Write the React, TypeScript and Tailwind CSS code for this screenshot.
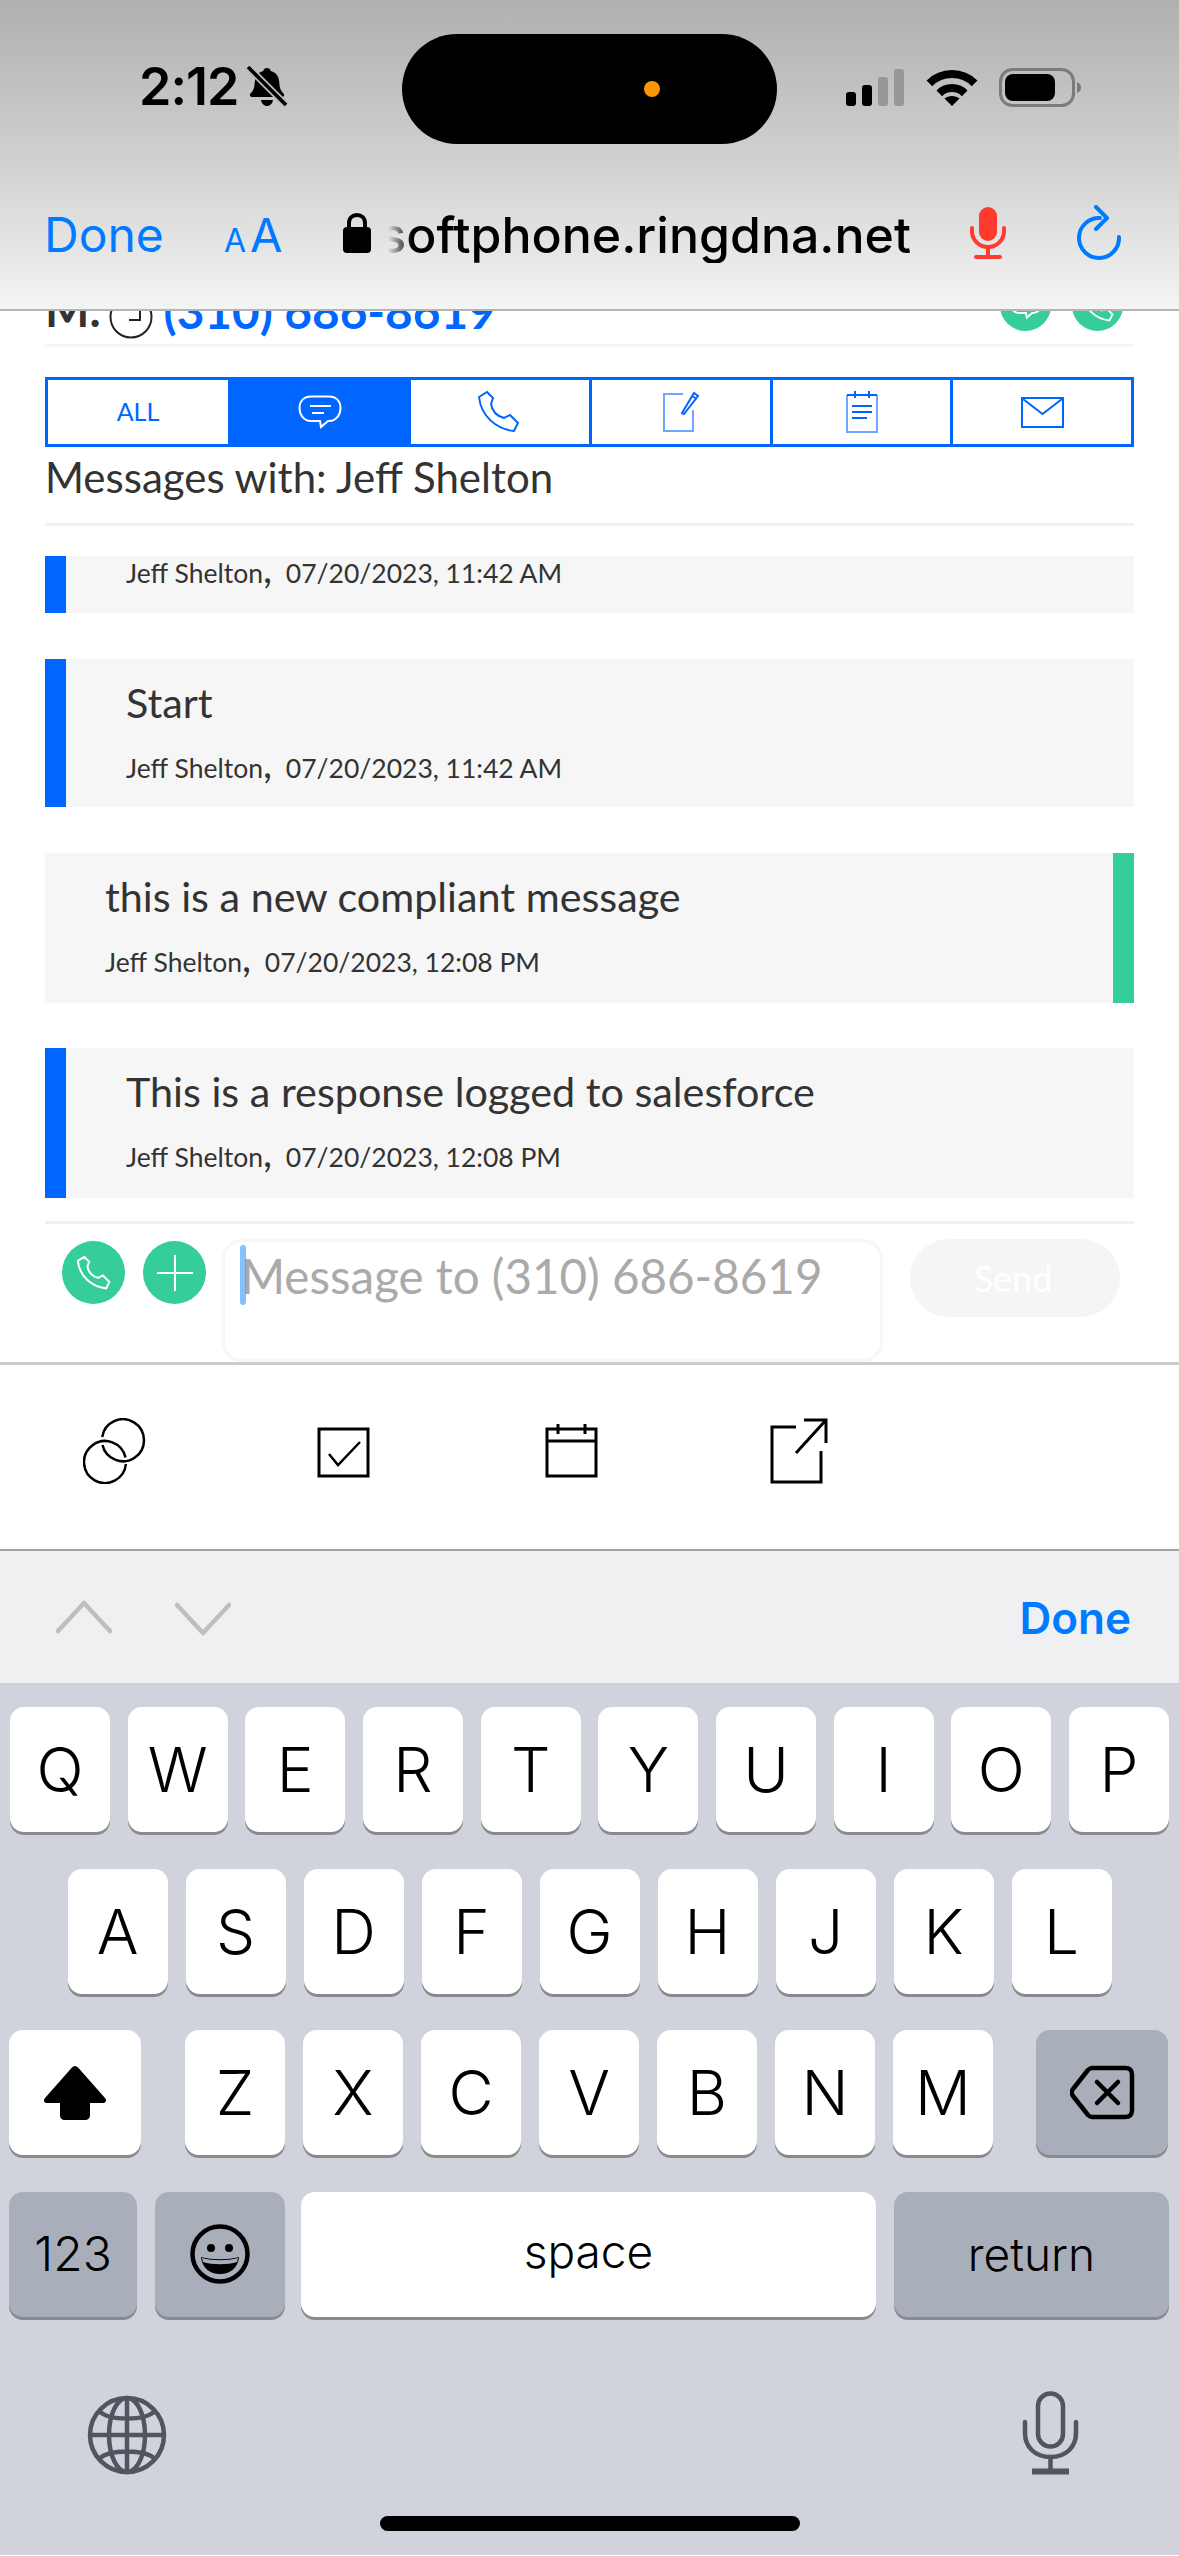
const row1 = ["Q", "W", "E", "R", "T", "Y", "U", "I", "O", "P"]
const row2 = ["A", "S", "D", "F", "G", "H", "J", "K", "L"]
const row3 = ["Z", "X", "C", "V", "B", "N", "M"]

const phonePath = "M1 6 L9 1 L15 7 L13 13 C14 20 19 25 26 27 L32 24 L40 32 L36 40 C18 38 3 25 1 6Z"

const messages = [
  { text: "Start", stamp: "07/20/2023, 11:42 AM", side: "left", box: "h-[148px] mt-[46px]" },
  { text: "this is a new compliant message", stamp: "07/20/2023, 12:08 PM", side: "right", box: "h-[150px] mt-[46px]" },
  { text: "This is a response logged to salesforce", stamp: "07/20/2023, 12:08 PM", side: "left", box: "h-[150px] mt-[45px]" },
]

const Stamp = ({ stamp }: { stamp: string }) => (
  <p className="text-[26.500px] leading-[34px] text-[#333] whitespace-nowrap">
    Jeff Shelton<span className="text-[40px] leading-[20px] mr-[7px]">,</span> {stamp}
  </p>
)

const Key = ({ label, w = "w-[100px]", dark, size = "text-[62px]", children }: { label?: string; w?: string; dark?: boolean; size?: string; children?: React.ReactNode }) => (
  <div className={`${w} h-[125px] shrink-0 rounded-[14px] flex items-center justify-center shadow-[0_3px_0_#898a8d] text-black font-['Inter',sans-serif] font-light ${size} ${dark ? "bg-[#a9afba]" : "bg-white"}`}>
    {label}
    {children}
  </div>
)

const StatusBar = () => (
  <div className="h-[143px] pt-[34px] flex">
    <div className="w-[402px] flex items-start pl-[139px] pt-[30px] gap-[8px]">
      <span className="text-[52px] leading-[46px] font-semibold font-['Inter',sans-serif] text-black tracking-[-1px]">2:12</span>
      <svg width="42" height="42" viewBox="0 0 42 42" className="mt-[2px]">
        <path d="M21 2c2 0 3.400 1.200 3.700 3 6 1.500 8.300 6 8.600 12 .3 5 1.500 8 4.200 10.500 1.200 1.200.6 3.500-1.300 3.500H5.800c-1.900 0-2.500-2.300-1.300-3.500C7.200 25 8.400 22 8.700 17c.3-6 2.600-10.500 8.600-12 .3-1.800 1.700-3 3.700-3z" fill="#000" />
        <path d="M15 34h12c-.5 3.500-3 6-6 6s-5.500-2.500-6-6z" fill="#000" />
        <path d="M3 2 L40 39" stroke="#bababa" strokeWidth="7" />
        <path d="M2 1 L40 39" stroke="#000" strokeWidth="3.500" />
      </svg>
    </div>
    <div className="w-[375px] h-[110px] bg-black rounded-[55px] flex items-center justify-end pr-[117px]">
      <div className="w-[16px] h-[16px] rounded-full bg-[#ff9500]" />
    </div>
    <div className="flex items-start pl-[69px] pt-[34px]">
      <svg width="236" height="40" viewBox="0 0 236 40">
        <rect x="0" y="24" width="10" height="14" rx="3" fill="#000" />
        <rect x="16" y="17" width="10" height="21" rx="3" fill="#000" />
        <rect x="32" y="9" width="10" height="29" rx="3" fill="#979797" />
        <rect x="48" y="1" width="10" height="37" rx="3" fill="#979797" />
        <path d="M83.400 15.400 A32 32 0 0 1 128.600 15.400" stroke="#000" strokeWidth="8" fill="none" />
        <path d="M93.300 25.300 A18 18 0 0 1 118.700 25.300" stroke="#000" strokeWidth="8" fill="none" />
        <path d="M106 38 L98.500 30.500 C102 27 110 27 113.500 30.500Z" fill="#000" />
        <rect x="154.500" y="1.500" width="73" height="36" rx="12" fill="none" stroke="#7b7b7b" strokeWidth="3" />
        <rect x="159" y="6" width="50" height="27" rx="8" fill="#000" />
        <path d="M231 14 C234 15 235 17 235 19.500 C235 22 234 24 231 25Z" fill="#7b7b7b" />
      </svg>
    </div>
  </div>
)

const UrlBar = () => (
  <div className="h-[166px] flex items-start pl-[44px] pt-[64px] font-['Inter',sans-serif]">
    <span className="text-[48px] leading-[56px] text-[#007aff] w-[180px]">Done</span>
    <span className="w-[119px] flex items-baseline text-[#007aff] leading-[56px]">
      <span className="text-[32px] mr-[4px]">A</span>
      <span className="text-[47px]">A</span>
    </span>
    <svg width="28" height="40" viewBox="0 0 28 40" className="mt-[6px] shrink-0">
      <path d="M6 16 V10 C6 5 9.500 2 14 2 C18.500 2 22 5 22 10 V16" stroke="#000" strokeWidth="4" fill="none" />
      <rect x="0" y="14" width="28" height="26" rx="4" fill="#000" />
    </svg>
    <div className="ml-[17px] w-[523px] overflow-hidden flex justify-end [mask-image:linear-gradient(to_right,transparent,black_24px)]">
      <span className="text-[50px] leading-[56px] font-medium text-black whitespace-nowrap">softphone.ringdna.net</span>
    </div>
    <svg width="36" height="52" viewBox="0 0 36 52" className="ml-[59px] shrink-0">
      <rect x="9" y="0" width="18" height="34" rx="9" fill="#ff3b30" />
      <path d="M2 21 V24 C2 33 9 40 18 40 C27 40 34 33 34 24 V21" stroke="#ff3b30" strokeWidth="4" fill="none" strokeLinecap="round" />
      <path d="M18 40 V50 M6 50 H30" stroke="#ff3b30" strokeWidth="4" fill="none" strokeLinecap="round" />
    </svg>
    <svg width="46" height="56" viewBox="0 0 46 56" className="ml-[70px] -mt-[2px] shrink-0">
      <path d="M43 32 A20 20 0 1 1 24 13" stroke="#007aff" strokeWidth="4" fill="none" strokeLinecap="round" />
      <path d="M20 2 L31 13 L20 24" stroke="#007aff" strokeWidth="4" fill="none" strokeLinecap="round" strokeLinejoin="round" />
    </svg>
  </div>
)

const ContactRow = () => (
  <div className="h-[36px] overflow-hidden flex items-end justify-between border-b-[3px] border-[#f6f6f6]">
    <div className="flex items-end shrink-0 pb-[11px]">
      <span className="text-[47px] leading-[44px] font-bold text-[#333] mr-[8px] mb-[2px]">M.</span>
      <svg width="44" height="44" viewBox="0 0 44 44" className="mr-[11px] -mb-[6px]">
        <circle cx="22" cy="22" r="20.500" fill="none" stroke="#222" strokeWidth="2" />
        <path d="M20 25 H31 V15" stroke="#222" strokeWidth="2" fill="none" />
      </svg>
      <span className="text-[47.700px] leading-[44px] font-bold text-[#0066ff]">(310) 686-8619</span>
    </div>
    <div className="flex gap-[21px] pr-[11px] mb-[13px]">
      <div className="w-[51px] h-[51px] rounded-full bg-[#35cd9a] flex items-center justify-center">
        <svg width="34" height="30" viewBox="0 0 44 34" fill="none" stroke="#fff" strokeWidth="2.500">
          <path d="M13 1.500 H31 C38 1.500 42.500 6 42.500 13 C42.500 20 38 26 31 26 H30 L23 32 L22 26 H13 C6 26 1.500 20 1.500 13 C1.500 6 6 1.500 13 1.500Z" />
        </svg>
      </div>
      <div className="w-[51px] h-[51px] rounded-full bg-[#35cd9a] flex items-center justify-center">
        <svg width="32" height="32" viewBox="0 0 42 42" fill="none" stroke="#fff" strokeWidth="2.500"><path d={phonePath} /></svg>
      </div>
    </div>
  </div>
)

const Tabs = () => (
  <div className="mt-[30px] h-[70px] border-[3px] border-[#0066ff] grid grid-cols-[180px_183px_181px_181px_180px_178px] text-[#0066ff]">
    <div className="flex items-center justify-center text-[25px]">ALL</div>
    <div className="bg-[#0066ff] flex items-center justify-center">
      <svg width="44" height="34" viewBox="0 0 44 34" fill="none" stroke="#fff" strokeWidth="2">
        <path d="M13 1.500 H31 C38 1.500 42.500 6 42.500 13 C42.500 20 38 26 31 26 H30 L23 32 L22 26 H13 C6 26 1.500 20 1.500 13 C1.500 6 6 1.500 13 1.500Z" />
        <path d="M12 11 H33 M14 18 H26" />
      </svg>
    </div>
    <div className="border-r-[3px] border-[#0066ff] flex items-center justify-center pr-[2px]">
      <svg width="42" height="42" viewBox="0 0 42 42" fill="none" stroke="#0066ff" strokeWidth="2"><path d={phonePath} /></svg>
    </div>
    <div className="border-r-[3px] border-[#0066ff] flex items-center justify-center">
      <svg width="38" height="44" viewBox="0 0 38 44" fill="none" strokeWidth="2">
        <path d="M21 4 H2 V41 H31 V20" stroke="#6fa6ff" />
        <path d="M20 23 L32 3 L36 6 L22 24 Z M30 6 L35 9" stroke="#0066ff" />
      </svg>
    </div>
    <div className="border-r-[3px] border-[#0066ff] flex items-center justify-center">
      <svg width="34" height="44" viewBox="0 0 34 44" fill="none" strokeWidth="2">
        <path d="M2 5 V42 H32 V5" stroke="#6fa6ff" />
        <path d="M2 5 H32 M10 1 V8 M24 1 V8 M7 16 H27 M7 22 H27 M7 28 H22" stroke="#0066ff" />
      </svg>
    </div>
    <div className="flex items-center justify-center">
      <svg width="43" height="31" viewBox="0 0 43 31" fill="none" stroke="#0066ff" strokeWidth="2">
        <rect x="1" y="1" width="41" height="29" />
        <path d="M2 2 L21.500 17 L41 2" />
      </svg>
    </div>
  </div>
)

const Bubble = ({ text, stamp, side, box }: { text: string; stamp: string; side: string; box: string }) => (
  <div className={`${box} bg-[#f6f6f6] flex`}>
    {side === "left" && <div className="w-[21px] bg-[#0066ff]" />}
    <div className="flex-1 pt-[18px] pl-[60px]">
      <p className="text-[41.300px] leading-[50px] text-[#333]">{text}</p>
      <div className="mt-[24px]"><Stamp stamp={stamp} /></div>
    </div>
    {side === "right" && <div className="w-[21px] bg-[#35cd9a]" />}
  </div>
)

const Composer = () => (
  <div className="h-[141px] mx-[45px] border-t-[3px] border-[#f0f0f0] flex items-start pt-[15px] overflow-hidden">
    <div className="ml-[17px] w-[63px] h-[63px] mt-[2px] rounded-full bg-[#35cd9a] flex items-center justify-center shrink-0">
      <svg width="34" height="34" viewBox="0 0 42 42" fill="none" stroke="#fff" strokeWidth="2.500"><path d={phonePath} /></svg>
    </div>
    <div className="ml-[18px] w-[63px] h-[63px] mt-[2px] rounded-full bg-[#35cd9a] flex items-center justify-center shrink-0">
      <svg width="36" height="36" viewBox="0 0 36 36" fill="none" stroke="#fff" strokeWidth="2"><path d="M18 0 V36 M0 18 H36" /></svg>
    </div>
    <div className="relative ml-[16px] w-[661px] h-[123px] shrink-0">
      <textarea readOnly placeholder="Message to (310) 686-8619" className="w-full h-full resize-none border-[3px] border-[#f7f7f7] rounded-[20px] pl-[16px] pt-[4px] text-[47.500px] leading-[60px] placeholder:text-[#aaaaaa] outline-none overflow-hidden" />
      <div className="absolute left-[18px] top-[6px] w-[6px] h-[60px] rounded-full bg-[#0a84ff] opacity-50" />
    </div>
    <div className="ml-[27px] w-[210px] h-[78px] rounded-[39px] bg-[#f5f5f5] flex items-center justify-center pr-[4px] text-[36px] text-white shrink-0">Send</div>
  </div>
)

const Toolbar = () => (
  <div className="h-[189px] border-t-[3px] border-[#cccccc] border-b-2 border-b-[#a0a0a0] flex items-start pt-[53px] pl-[83px]">
    <svg width="64" height="66" viewBox="0 0 64 66" fill="none" stroke="#000" strokeWidth="2.500">
      <path d="M19.200 19 A21 21 0 1 1 19.500 27" />
      <path d="M42.900 46 A21 21 0 1 1 42.500 39.500" />
    </svg>
    <svg width="53" height="52" viewBox="0 0 53 52" fill="none" stroke="#000" strokeWidth="3" className="ml-[170px] mt-[9px]">
      <rect x="2" y="2" width="49" height="47" />
      <path d="M12 27 L21 38 L43 15" strokeWidth="2.500" />
    </svg>
    <svg width="53" height="54" viewBox="0 0 53 54" fill="none" stroke="#000" strokeWidth="3" className="ml-[175px] mt-[6px]">
      <rect x="2" y="5" width="49" height="47" />
      <path d="M2 17 H51 M13 0 V10 M40 0 V10" />
    </svg>
    <svg width="58" height="66" viewBox="0 0 58 66" fill="none" stroke="#000" strokeWidth="3" className="ml-[172px]">
      <path d="M26 9 H2 V64 H51 V33" />
      <path d="M26 35 L56 2 M34 2 H56 V25" />
    </svg>
  </div>
)

const AccessoryBar = () => (
  <div className="h-[132px] bg-[#eff0f2] flex items-start pl-[56px] pt-[49px]">
    <svg width="56" height="34" viewBox="0 0 56 34" fill="none" stroke="#bfbfbf" strokeWidth="4.500" strokeLinecap="round" strokeLinejoin="round">
      <path d="M2 31 L28 3 L54 31" />
    </svg>
    <svg width="56" height="34" viewBox="0 0 56 34" fill="none" stroke="#bfbfbf" strokeWidth="4.500" strokeLinecap="round" strokeLinejoin="round" className="ml-[63px] mt-[2px]">
      <path d="M2 3 L28 31 L54 3" />
    </svg>
    <span className="ml-auto mr-[48px] -mt-[10px] text-[44px] leading-[56px] font-semibold text-[#007aff] font-['Inter',sans-serif]">Done</span>
  </div>
)

const Keyboard = () => (
  <div className="h-[872px] bg-[#d0d3dc] pt-[24px] flex flex-col">
    <div className="flex flex-col gap-[36.5px]">
      <div className="flex justify-between px-[10px]">
        {row1.map((k) => <Key key={k} label={k} />)}
      </div>
      <div className="flex justify-center gap-[18px]">
        {row2.map((k) => <Key key={k} label={k} />)}
      </div>
      <div className="flex pl-[9px]">
        <Key w="w-[132px]">
          <svg width="64" height="56" viewBox="0 0 64 56" fill="#000">
            <path d="M32 1 C33.500 1 34.500 2 35.500 3 L62 33 C64 35.500 63 38 60 38 H47 V50 C47 53.500 45 55 42 55 H22 C19 55 17 53.500 17 50 V38 H4 C1 38 0 35.500 2 33 L28.500 3 C29.500 2 30.500 1 32 1Z" />
          </svg>
        </Key>
        <div className="ml-[44px] flex gap-[18px]">
          {row3.map((k) => <Key key={k} label={k} />)}
        </div>
        <div className="ml-[43px]">
          <Key w="w-[132px]" dark>
            <svg width="65" height="55" viewBox="0 0 65 55" fill="none" stroke="#000" strokeWidth="4.500" strokeLinejoin="round" strokeLinecap="round">
              <path d="M22 3 H55 C60 3 62 5 62 10 V45 C62 50 60 52 55 52 H22 C20 52 19 51 18 50 L3 31 C1.500 29 1.500 26 3 24 L18 5 C19 4 20 3 22 3Z" />
              <path d="M27 17 L48 38 M48 17 L27 38" />
            </svg>
          </Key>
        </div>
      </div>
      <div className="flex pl-[9px]">
        <Key w="w-[128px]" dark size="text-[48px]" label="123" />
        <div className="ml-[18px]">
          <Key w="w-[130px]" dark>
            <svg width="60" height="60" viewBox="0 0 60 60">
              <circle cx="30" cy="30" r="27.500" fill="none" stroke="#000" strokeWidth="4.500" />
              <circle cx="21" cy="24" r="4" fill="#000" />
              <circle cx="39" cy="24" r="4" fill="#000" />
              <path d="M11 33 C22 36 38 36 49 33 C48 44 40 50 30 50 C20 50 12 44 11 33Z" fill="#000" />
              <path d="M12 34 C22 37 38 37 48 34 L47 38 C38 41 22 41 13 38Z" fill="#a9afba" />
            </svg>
          </Key>
        </div>
        <div className="ml-[16px]">
          <Key w="w-[575px]" size="text-[46px]">
            <span className="pb-[6px]">space</span>
          </Key>
        </div>
        <div className="ml-[18px]">
          <Key w="w-[275px]" dark size="text-[46px]" label="return" />
        </div>
      </div>
    </div>
    <div className="flex justify-between pl-[87px] pr-[100px] mt-[74px] h-[84px] items-end">
      <svg width="80" height="80" viewBox="0 0 80 80" fill="none" stroke="#50555f" strokeWidth="4.500">
        <circle cx="40" cy="40" r="37" />
        <ellipse cx="40" cy="40" rx="18" ry="37" />
        <path d="M40 3 V77 M3 40 H77 M12 16 C22 26 58 26 68 16 M12 64 C22 54 58 54 68 64" />
      </svg>
      <svg width="57" height="84" viewBox="0 0 57 84" fill="none" stroke="#50555f" strokeWidth="4.500">
        <rect x="16" y="2.500" width="25" height="53" rx="12.500" />
        <path d="M3 31 V42 C3 56 13 66 28.500 66 C44 66 54 56 54 42 V31" strokeLinecap="round" />
        <path d="M28.500 66 V79" />
        <path d="M10 80.500 H47" strokeWidth="6" />
      </svg>
    </div>
    <div className="mt-[41px] w-[420px] h-[15px] rounded-full bg-black ml-[380px]" />
  </div>
)

function App() {
  return (
    <div className="w-[1179px] h-[2556px] overflow-hidden bg-white flex flex-col font-['Lato',sans-serif]">
      <header className="h-[311px] shrink-0 bg-linear-to-b from-[#b0b0b0] via-[#cfcfcf] to-[#f3f4f4] border-b-2 border-[#b5b5b5]">
        <StatusBar />
        <UrlBar />
      </header>

      <main className="px-[45px]">
        <ContactRow />
        <Tabs />
        <div className="h-[79px] border-b-[3px] border-[#f0f0f0] text-[42px] leading-[60px] text-[#333]">Messages with: Jeff Shelton</div>
        <div className="mt-[30px] flex flex-col pb-[23px]">
          <div className="h-[57px] bg-[#f6f6f6] flex">
            <div className="w-[21px] bg-[#0066ff]" />
            <div className="pl-[60px]"><Stamp stamp="07/20/2023, 11:42 AM" /></div>
          </div>
          {messages.map((m, i) => <Bubble key={i} {...m} />)}
        </div>
      </main>

      <Composer />
      <Toolbar />
      <AccessoryBar />
      <Keyboard />
    </div>
  )
}

export default App
